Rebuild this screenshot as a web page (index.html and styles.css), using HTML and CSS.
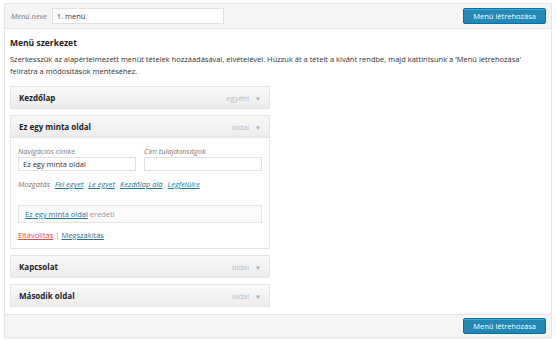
FILE: index.html
```html
<!DOCTYPE html>
<html lang="hu">
<head>
    <meta charset="UTF-8">
    <title>Menük</title>
    <link rel="stylesheet" href="styles.css">
</head>
<body>
    <div class="menu-edit">
        <div class="menu-header">
            <label class="name-label">Menü neve</label>
            <input class="name-input" type="text" value="1. menü">
            <button class="primary-btn">Menü létrehozása</button>
        </div>
        <div class="menu-body">
            <h3>Menü szerkezet</h3>
            <p class="help">Szerkesszük az alapértelmezett menüt tételek hozzáadásával, elvételével. Húzzuk át a tételt a kívánt rendbe, majd kattintsunk a 'Menü létrehozása' feliratra a módosítások mentéséhez.</p>

            <ul class="menu-items">
                <li class="menu-item">
                    <div class="item-bar">
                        <span class="item-title">Kezdőlap</span>
                        <span class="item-type">egyéni <i class="arrow">&#9660;</i></span>
                    </div>
                </li>
                <li class="menu-item open">
                    <div class="item-bar">
                        <span class="item-title">Ez egy minta oldal</span>
                        <span class="item-type">oldal <i class="arrow">&#9660;</i></span>
                    </div>
                    <div class="item-settings">
                        <div class="fields">
                            <label class="field">
                                <span>Navigációs címke</span>
                                <input type="text" value="Ez egy minta oldal">
                            </label>
                            <label class="field">
                                <span>Cím tulajdonságok</span>
                                <input type="text" value="">
                            </label>
                        </div>
                        <div class="move">
                            <span>Mozgatás</span>
                            <a href="#">Fel egyet</a>
                            <a href="#">Le egyet</a>
                            <a href="#">Kezdőlap alá</a>
                            <a href="#">Legfelülre</a>
                        </div>
                        <div class="original">
                            <a href="#">Ez egy minta oldal</a> eredeti
                        </div>
                        <div class="actions">
                            <a class="delete" href="#">Eltávolítás</a> <span class="sep">|</span> <a href="#">Megszakítás</a>
                        </div>
                    </div>
                </li>
                <li class="menu-item">
                    <div class="item-bar">
                        <span class="item-title">Kapcsolat</span>
                        <span class="item-type">oldal <i class="arrow">&#9660;</i></span>
                    </div>
                </li>
                <li class="menu-item">
                    <div class="item-bar">
                        <span class="item-title">Második oldal</span>
                        <span class="item-type">oldal <i class="arrow">&#9660;</i></span>
                    </div>
                </li>
            </ul>
        </div>
        <div class="menu-footer">
            <button class="primary-btn">Menü létrehozása</button>
        </div>
    </div>
</body>
</html>
```

FILE: styles.css
```css
* {
    box-sizing: border-box;
    margin: 0;
    padding: 0;
}
body {
    font-family: "Open Sans", sans-serif;
    font-size: 7.5px;
    color: #333;
    background: #fff;
    padding: 3px 4px;
}
.menu-edit {
    border: 1px solid #e5e5e5;
    box-shadow: 0 1px 1px rgba(0, 0, 0, 0.04);
}
.menu-header,
.menu-footer {
    display: flex;
    align-items: center;
    height: 25px;
    padding: 0 5px;
    background: #f5f5f5;
}
.menu-header {
    border-bottom: 1px solid #e5e5e5;
}
.menu-footer {
    height: 23px;
    justify-content: flex-end;
    border-top: 1px solid #e5e5e5;
}
.name-label {
    font-style: italic;
    color: #777;
    margin-right: 5px;
    margin-left: 1px;
}
.name-input {
    width: 172px;
    height: 16px;
    border: 1px solid #e1e1e1;
    background: #fff;
    padding: 0 4px;
    font: inherit;
    color: #333;
}
.primary-btn {
    margin-left: auto;
    height: 16px;
    padding: 0 9px;
    border: 1px solid #0073a0;
    border-radius: 2px;
    background: #2289b7;
    color: #fff;
    font: inherit;
    box-shadow: inset 0 1px 0 rgba(120, 200, 230, 0.5);
}
.menu-body {
    padding: 8px 5px 7px;
}
h3 {
    font-size: 8.5px;
    font-weight: bold;
    color: #222;
    margin-bottom: 5px;
}
.help {
    line-height: 12px;
    margin-bottom: 9px;
    width: 520px;
}
.menu-items {
    list-style: none;
    width: 260px;
    display: flex;
    flex-direction: column;
    gap: 6px;
}
.item-bar {
    display: flex;
    align-items: center;
    height: 23px;
    padding: 0 8px;
    border: 1px solid #e5e5e5;
    background: linear-gradient(#f9f9f9, #ececec);
}
.item-title {
    font-weight: bold;
    font-size: 8px;
    color: #222;
}
.item-type {
    margin-left: auto;
    color: #bbb;
}
.arrow {
    font-style: normal;
    font-size: 6px;
    color: #aaa;
    margin-left: 4px;
}
.item-settings {
    border: 1px solid #e5e5e5;
    border-top: none;
    padding: 8px 7px 7px;
}
.fields {
    display: flex;
    gap: 8px;
    margin-bottom: 8px;
}
.field {
    flex: 1;
    display: flex;
    flex-direction: column;
    gap: 1px;
}
.field span {
    font-style: italic;
    color: #777;
}
.field input {
    height: 14px;
    border: 1px solid #e1e1e1;
    padding: 0 4px;
    font: inherit;
    color: #333;
}
.move {
    display: flex;
    gap: 5px;
    color: #777;
    font-style: italic;
    margin-bottom: 16px;
}
.move a {
    color: #21759b;
    text-decoration: underline;
}
.original {
    border: 1px solid #e5e5e5;
    background: #fbfbfb;
    padding: 3px 6px;
    color: #999;
    margin-bottom: 6px;
}
.original a {
    color: #21759b;
}
.actions {
    line-height: 12px;
}
.actions a {
    color: #21759b;
}
.actions a.delete {
    color: #e14d43;
}
.sep {
    color: #999;
}
```
